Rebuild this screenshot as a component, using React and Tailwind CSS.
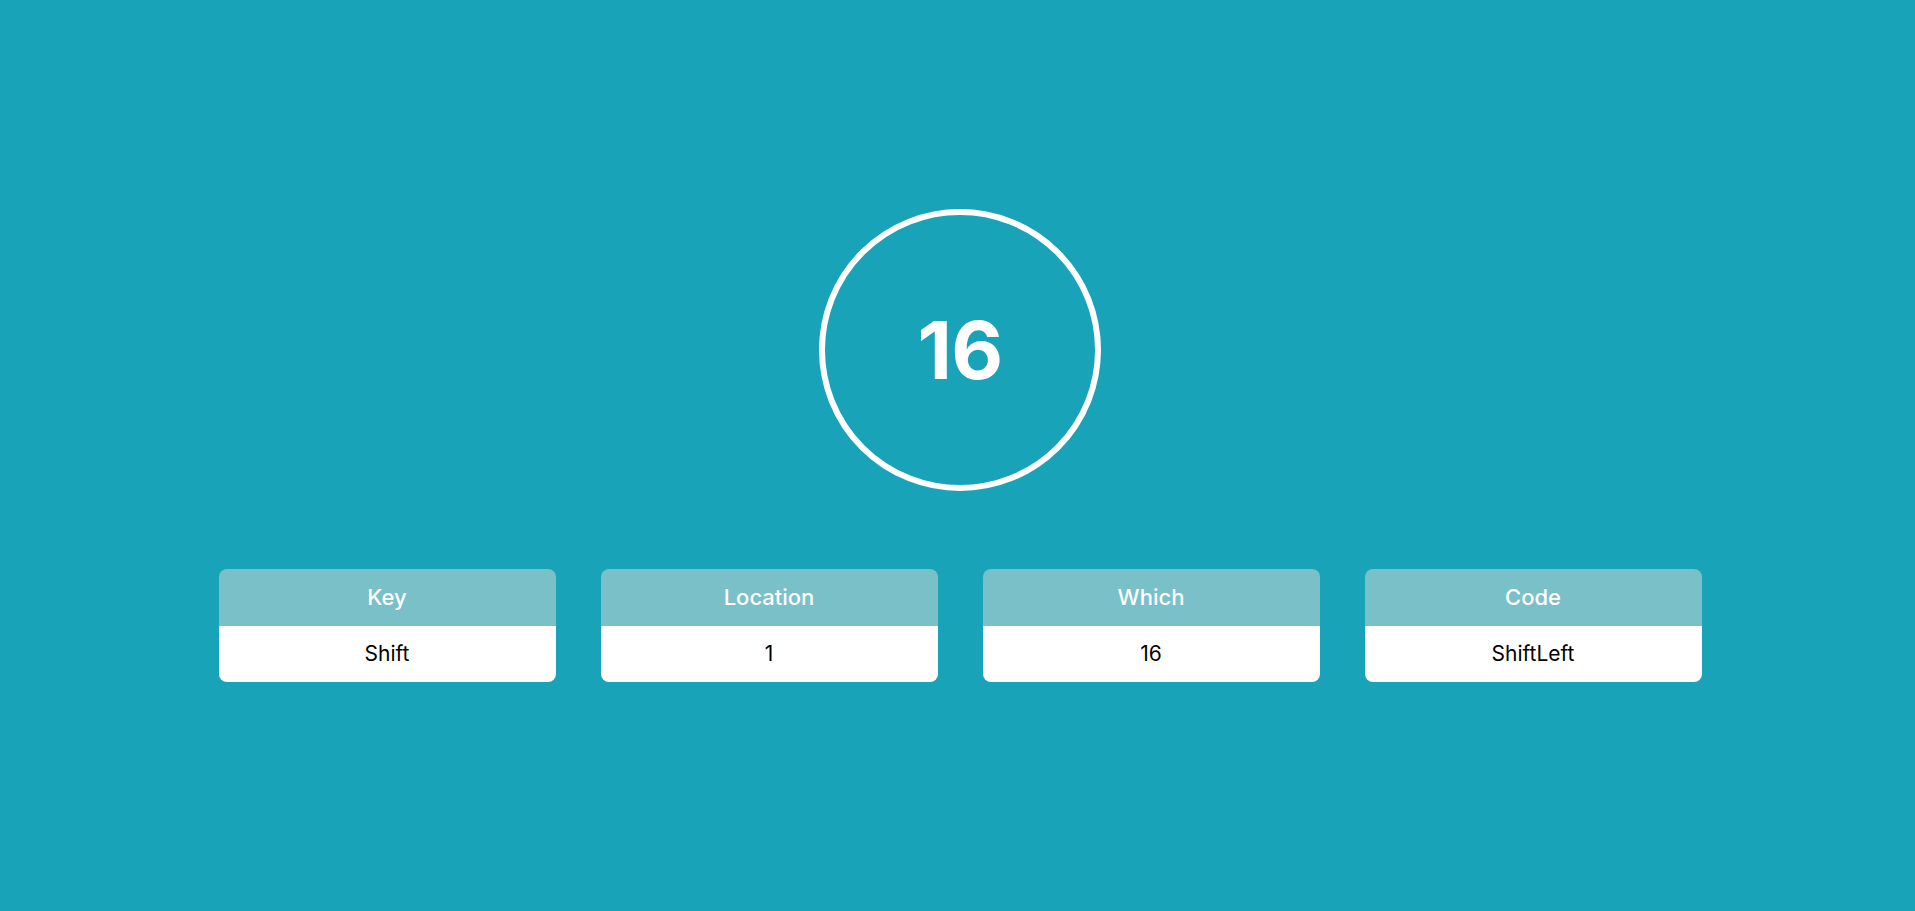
import React from 'react';

const fields = [
  { label: 'Key', value: 'Shift' },
  { label: 'Location', value: '1' },
  { label: 'Which', value: '16' },
  { label: 'Code', value: 'ShiftLeft' },
];

const App = () => {
  return (
    <div
      className="min-h-screen w-full bg-[#19a3b8] flex flex-col items-center pt-[209px] pl-[5px]"
      style={{ fontFamily: 'Inter, "Open Sans", sans-serif' }}
    >
      {/* Código de tecla */}
      <div className="w-[282px] h-[282px] rounded-full border-[6px] border-white flex items-center justify-center">
        <span className="text-white text-[80px] font-bold leading-none tracking-[-0.01em]">16</span>
      </div>

      {/* Tarjetas */}
      <div className="mt-[78px] flex gap-[45px]">
        {fields.map((f) => (
          <div key={f.label} className="w-[337px] rounded-lg overflow-hidden">
            <div className="h-[57px] bg-[#79c0c9] flex items-center justify-center text-white text-[22px] font-medium">
              {f.label}
            </div>
            <div className="h-[56px] bg-white flex items-center justify-center text-black text-[21px]">
              {f.value}
            </div>
          </div>
        ))}
      </div>
    </div>
  );
};

export default App;
